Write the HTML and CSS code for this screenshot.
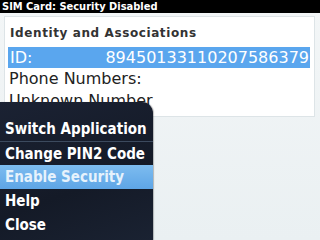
FILE: index.html
```html
<!DOCTYPE html>
<html lang="en">
<head>
  <meta charset="UTF-8" />
  <title>SIM Card</title>
  <link rel="stylesheet" href="styles.css">
</head>
<body>
  <div class="titlebar">SIM Card: Security Disabled</div>

  <!-- Identity panel -->
  <div class="panel">
    <div class="heading">Identity and Associations</div>
    <div class="row selected">
      <span>ID:</span>
      <span>89450133110207586379</span>
    </div>
    <div class="line">Phone Numbers:</div>
    <div class="line">Unknown Number</div>
  </div>

  <!-- Popup menu -->
  <div class="menu">
    <div class="item first">Switch Application</div>
    <div class="item">Change PIN2 Code</div>
    <div class="item active">Enable Security</div>
    <div class="item">Help</div>
    <div class="item">Close</div>
  </div>
</body>
</html>
```

FILE: styles.css
```css
* {
  box-sizing: border-box;
}
body {
  margin: 0;
  width: 320px;
  height: 240px;
  overflow: hidden;
  position: relative;
  font-family: 'DejaVu Sans', sans-serif;
  background: linear-gradient(#f3f6f7, #eaf0f2);
}
.titlebar {
  height: 13px;
  line-height: 13px;
  padding-left: 2px;
  background: #000;
  color: #fff;
  font-family: 'DejaVu Sans Condensed', 'DejaVu Sans', sans-serif;
  font-weight: bold;
  font-size: 11px;
}
.panel {
  margin: 3px 5px 0 4px;
  height: 101px;
  background: #fff;
  border: 1px solid #dde4e7;
  padding: 8px 4px 0 3px;
  overflow: hidden;
}
.heading {
  color: #333;
  font-weight: bold;
  font-size: 12px;
  letter-spacing: 0.6px;
  padding-left: 2px;
  height: 22px;
  line-height: 16px;
}
.row {
  display: flex;
  justify-content: space-between;
  height: 21px;
  line-height: 21px;
  font-size: 16px;
  padding: 0 1px 0 2px;
}
.selected {
  background: #5aa6ee;
  color: #fff;
}
.line {
  font-size: 16px;
  color: #222;
  line-height: 22px;
  padding-left: 1px;
}
.menu {
  position: absolute;
  left: 0;
  top: 102px;
  width: 153px;
  height: 138px;
  padding-top: 15px;
  background: linear-gradient(160deg, #1b2233, #141a27 60%, #1a2232);
  border-top-right-radius: 11px;
  box-shadow: 1px 0 1px rgba(0,0,0,0.25);
}
.item {
  height: 24px;
  line-height: 24px;
  padding-left: 5px;
  color: #fff;
  font-family: 'DejaVu Sans Condensed', 'DejaVu Sans', sans-serif;
  font-weight: bold;
  font-size: 15px;
  white-space: nowrap;
}
.item.first {
  border-bottom: 1px solid #3c4a5e;
  height: 25px;
}
.item:nth-child(2) {
  height: 23px;
}
.active {
  background: linear-gradient(#7dbcef, #5ea5e6);
  color: #e6f2fc;
}
```
